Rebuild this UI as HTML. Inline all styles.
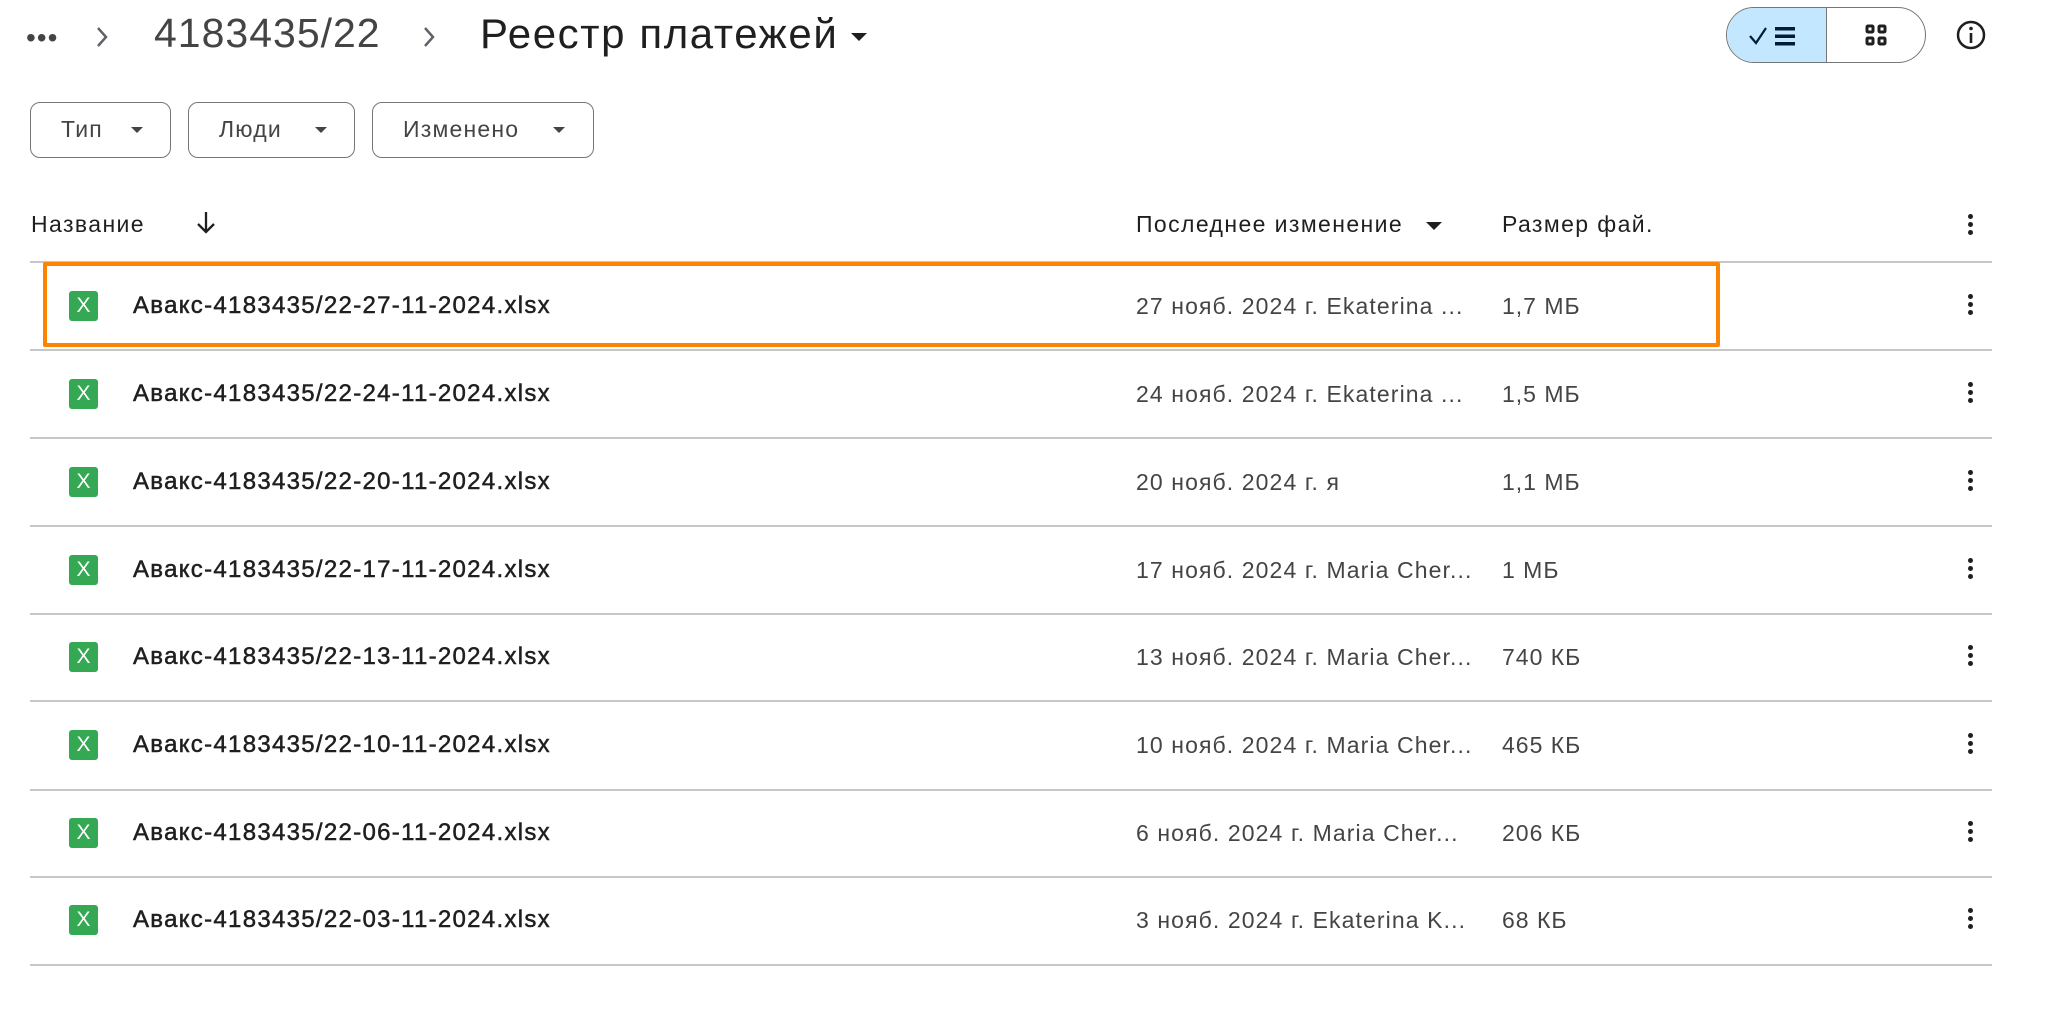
<!DOCTYPE html>
<html><head><meta charset="utf-8"><style>
*{margin:0;padding:0;box-sizing:border-box}
body{width:2048px;height:1019px;background:#fff;font-family:"Liberation Sans",sans-serif;color:#1f1f1f;position:relative;overflow:hidden}
.a{position:absolute;white-space:nowrap}
.chip{position:absolute;top:102px;height:56px;border:1.5px solid #747775;border-radius:10px;font-size:23px;letter-spacing:1.2px;color:#444;line-height:53px;padding-left:30px}
.chip .tri{position:absolute;top:24px;width:0;height:0;border-left:6px solid transparent;border-right:6px solid transparent;border-top:6px solid #444}
.line{position:absolute;left:30px;width:1962px;height:1.5px;background:#c7c7c7}
.ic{position:absolute;left:69px;width:29px;height:30px;background:#34a853;border-radius:3px;color:#fff;font-size:21px;text-align:center;line-height:30px}
.fn{position:absolute;left:133px;font-size:24px;letter-spacing:1.3px;-webkit-text-stroke:0.5px #1f1f1f;color:#1f1f1f}
.dt{position:absolute;left:1136px;font-size:23px;color:#444;letter-spacing:1.1px}
.sz{position:absolute;left:1502px;font-size:23px;color:#444;letter-spacing:1px}
.hd{font-size:23px;letter-spacing:1.4px}
.keb{position:absolute;left:1968px;width:5px}
.keb i{display:block;width:5px;height:5px;border-radius:50%;background:#1f1f1f;margin-bottom:3px}
</style></head><body>
<div class="a" style="left:26px;top:22px;font-size:28px;letter-spacing:1px;color:#444">•••</div>
<svg class="a" style="left:94px;top:24px" width="16" height="26"><path d="M4 4l8 9-8 9" stroke="#5f6368" stroke-width="2.5" fill="none"/></svg>
<div class="a" style="left:154px;top:10px;font-size:41px;letter-spacing:1px;color:#444">4183435/22</div>
<svg class="a" style="left:421px;top:24px" width="16" height="26"><path d="M4 4l8 9-8 9" stroke="#5f6368" stroke-width="2.5" fill="none"/></svg>
<div class="a" style="left:480px;top:10px;font-size:42px;letter-spacing:1.6px;color:#1f1f1f">Реестр платежей</div>
<div class="a" style="left:851px;top:33px;border-left:8px solid transparent;border-right:8px solid transparent;border-top:8px solid #1f1f1f"></div>

<div class="a" style="left:1726px;top:7px;width:200px;height:56px;border:1.5px solid #747775;border-radius:28px;overflow:hidden">
 <div style="position:absolute;left:0;top:0;width:100px;height:56px;background:#c2e7ff;border-right:1.5px solid #747775"></div>
 <svg style="position:absolute;left:20px;top:14px" width="60" height="28"><path d="M3 14l6 7 10-15" stroke="#001d35" stroke-width="2.2" fill="none"/><rect x="28" y="5" width="20" height="3.5" fill="#001d35"/><rect x="28" y="12.5" width="20" height="3.5" fill="#001d35"/><rect x="28" y="20" width="20" height="3.5" fill="#001d35"/></svg>
 <svg style="position:absolute;left:138px;top:16px" width="24" height="24"><g fill="none" stroke="#1f1f1f" stroke-width="3"><rect x="2" y="2" width="6" height="6" rx="1"/><rect x="14" y="2" width="6" height="6" rx="1"/><rect x="2" y="14" width="6" height="6" rx="1"/><rect x="14" y="14" width="6" height="6" rx="1"/></g></svg>
</div>
<svg class="a" style="left:1955px;top:19px" width="32" height="32"><circle cx="16" cy="16" r="13" fill="none" stroke="#1f1f1f" stroke-width="2.5"/><rect x="14.7" y="14" width="2.6" height="10" fill="#1f1f1f"/><circle cx="16" cy="9.5" r="1.8" fill="#1f1f1f"/></svg>

<div class="chip" style="left:30px;width:141px">Тип<span class="tri" style="left:100px"></span></div>
<div class="chip" style="left:188px;width:167px">Люди<span class="tri" style="left:126px"></span></div>
<div class="chip" style="left:372px;width:222px">Изменено<span class="tri" style="left:180px"></span></div>

<div class="a hd" style="left:31px;top:211px">Название</div>
<svg class="a" style="left:194px;top:210px" width="24" height="26"><path d="M12 2v20M4 14l8 8 8-8" stroke="#1f1f1f" stroke-width="2.3" fill="none"/></svg>
<div class="a hd" style="left:1136px;top:211px">Последнее изменение</div>
<div class="a" style="left:1426px;top:222px;border-left:8px solid transparent;border-right:8px solid transparent;border-top:8px solid #1f1f1f"></div>
<div class="a hd" style="left:1502px;top:211px">Размер фай.</div>
<div class="keb" style="top:214px"><i></i><i></i><i></i></div>

<div class="line" style="top:261px"></div>
<div class="line" style="top:349px"></div>
<div class="line" style="top:437px"></div>
<div class="line" style="top:525px"></div>
<div class="line" style="top:613px"></div>
<div class="line" style="top:700px"></div>
<div class="line" style="top:789px"></div>
<div class="line" style="top:876px"></div>
<div class="line" style="top:964px"></div>

<div style="position:absolute;top:0;left:0">
<div class="ic" style="top:291px">X</div><div class="fn a" style="top:292px">Авакс-4183435/22-27-11-2024.xlsx</div><div class="dt a" style="top:293px">27 нояб. 2024 г. Ekaterina ...</div><div class="sz a" style="top:293px">1,7 МБ</div><div class="keb" style="top:294px"><i></i><i></i><i></i></div>
<div class="ic" style="top:379px">X</div><div class="fn a" style="top:380px">Авакс-4183435/22-24-11-2024.xlsx</div><div class="dt a" style="top:381px">24 нояб. 2024 г. Ekaterina ...</div><div class="sz a" style="top:381px">1,5 МБ</div><div class="keb" style="top:382px"><i></i><i></i><i></i></div>
<div class="ic" style="top:467px">X</div><div class="fn a" style="top:468px">Авакс-4183435/22-20-11-2024.xlsx</div><div class="dt a" style="top:469px">20 нояб. 2024 г. я</div><div class="sz a" style="top:469px">1,1 МБ</div><div class="keb" style="top:470px"><i></i><i></i><i></i></div>
<div class="ic" style="top:555px">X</div><div class="fn a" style="top:556px">Авакс-4183435/22-17-11-2024.xlsx</div><div class="dt a" style="top:557px">17 нояб. 2024 г. Maria Cher...</div><div class="sz a" style="top:557px">1 МБ</div><div class="keb" style="top:558px"><i></i><i></i><i></i></div>
<div class="ic" style="top:642px">X</div><div class="fn a" style="top:643px">Авакс-4183435/22-13-11-2024.xlsx</div><div class="dt a" style="top:644px">13 нояб. 2024 г. Maria Cher...</div><div class="sz a" style="top:644px">740 КБ</div><div class="keb" style="top:645px"><i></i><i></i><i></i></div>
<div class="ic" style="top:730px">X</div><div class="fn a" style="top:731px">Авакс-4183435/22-10-11-2024.xlsx</div><div class="dt a" style="top:732px">10 нояб. 2024 г. Maria Cher...</div><div class="sz a" style="top:732px">465 КБ</div><div class="keb" style="top:733px"><i></i><i></i><i></i></div>
<div class="ic" style="top:818px">X</div><div class="fn a" style="top:819px">Авакс-4183435/22-06-11-2024.xlsx</div><div class="dt a" style="top:820px">6 нояб. 2024 г. Maria Cher...</div><div class="sz a" style="top:820px">206 КБ</div><div class="keb" style="top:821px"><i></i><i></i><i></i></div>
<div class="ic" style="top:905px">X</div><div class="fn a" style="top:906px">Авакс-4183435/22-03-11-2024.xlsx</div><div class="dt a" style="top:907px">3 нояб. 2024 г. Ekaterina K...</div><div class="sz a" style="top:907px">68 КБ</div><div class="keb" style="top:908px"><i></i><i></i><i></i></div>
</div>

<div class="a" style="left:43px;top:262px;width:1677px;height:85px;border:4px solid #fb8500;border-radius:2px"></div>
</body></html>
